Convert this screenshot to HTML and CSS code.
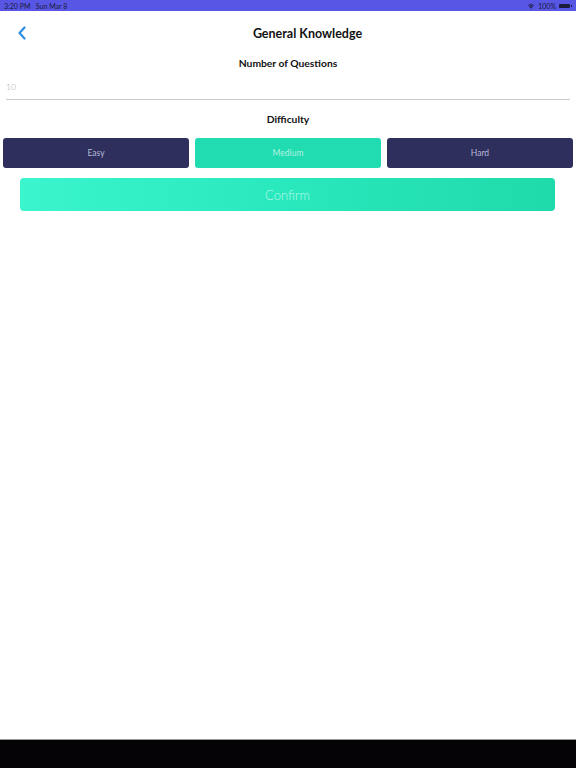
FILE: index.html
```html
<!DOCTYPE html>
<html>
<head>
<meta charset="utf-8">
<link rel="stylesheet" href="styles.css">
</head>
<body>
<div class="screen">
  <div class="statusbar">
    <span class="time">3:20 PM&nbsp;&nbsp; Sun Mar 8</span>
    <span class="right">
      <svg class="wifi" width="8" height="6" viewBox="0 0 16 12"><path d="M8 11.5 L5.5 8.6 A3.6 3.6 0 0 1 10.5 8.6 Z M3.6 6.6 A6.5 6.5 0 0 1 12.4 6.6 L11.3 7.8 A5 5 0 0 0 4.7 7.8 Z M1.5 4.4 A9.5 9.5 0 0 1 14.5 4.4 L13.4 5.6 A8 8 0 0 0 2.6 5.6 Z" fill="#1c1c3a"/></svg>
      <span class="pct">100%</span>
      <span class="battery"></span>
    </span>
  </div>
  <div class="nav">
    <svg class="back" width="10" height="14" viewBox="0 0 10 14"><path d="M7.5 1.5 L2.5 7 L7.5 12.5" fill="none" stroke="#2f8de4" stroke-width="2.2" stroke-linecap="round" stroke-linejoin="round"/></svg>
    <div class="title">General Knowledge</div>
  </div>
  <div class="label">Number of Questions</div>
  <div class="field"><span class="value">10</span></div>
  <div class="label diff">Difficulty</div>
  <div class="choices">
    <div class="choice">Easy</div>
    <div class="choice active">Medium</div>
    <div class="choice">Hard</div>
  </div>
  <div class="confirm">Confirm</div>
  <div class="spacer"></div>
  <div class="homebar"></div>
</div>
</body>
</html>
```
FILE: styles.css
```css
html, body {
  margin: 0;
  padding: 0;
  background: #ffffff;
}
.screen {
  width: 576px;
  height: 768px;
  display: flex;
  flex-direction: column;
  font-family: "Lato", "Noto Sans", sans-serif;
}
.statusbar {
  height: 11px;
  background: #5856e4;
  display: flex;
  align-items: center;
  justify-content: space-between;
  padding: 0 4px;
  font-size: 7px;
  color: #1c1c3a;
}
.statusbar .right {
  display: flex;
  align-items: center;
  gap: 3px;
}
.battery {
  width: 11px;
  height: 4px;
  background: #1c1c3a;
  border-radius: 1px;
  position: relative;
  margin-right: 2px;
}
.battery::after {
  content: "";
  position: absolute;
  right: -1.5px;
  top: 1px;
  width: 1px;
  height: 2px;
  background: #1c1c3a;
}
.nav {
  height: 44px;
  display: flex;
  align-items: center;
  padding-left: 17px;
}
.back {
  flex: none;
}
.title {
  flex: 1;
  text-align: center;
  font-weight: 700;
  font-size: 12.5px;
  color: #111;
  padding-left: 12px;
}
.label {
  text-align: center;
  font-weight: 700;
  font-size: 10.3px;
  color: #111;
  line-height: 14px;
  margin-top: 1px;
}
.field {
  margin: 0 6px;
  height: 30px;
  border-bottom: 1px solid #c9c9c9;
  display: flex;
  align-items: center;
  padding-top: 4px;
  box-sizing: border-box;
}
.value {
  font-size: 8.5px;
  color: #a6a6a6;
  font-weight: 300;
}
.diff {
  margin-top: 12px;
}
.choices {
  display: flex;
  gap: 6px;
  margin: 12px 3px 0;
}
.choice {
  flex: 1;
  height: 30px;
  border-radius: 3px;
  background: #2e2f5d;
  color: #b9bad6;
  font-size: 8.5px;
  display: flex;
  align-items: center;
  justify-content: center;
  font-weight: 400;
}
.choice.active {
  background: #22dcb1;
  color: #b4f1e2;
}
.confirm {
  margin: 10px 21px 0 20px;
  height: 33px;
  border-radius: 4px;
  background: linear-gradient(90deg, #3af5cd 0%, #2ae8bd 50%, #1fdaaa 100%);
  color: #b8fbe9;
  font-size: 13px;
  font-weight: 300;
  display: flex;
  align-items: center;
  justify-content: center;
}
.spacer {
  flex: 1;
}
.homebar {
  height: 28px;
  background: #050305;
  border-top: 1px solid #9a9a9a;
}
```
